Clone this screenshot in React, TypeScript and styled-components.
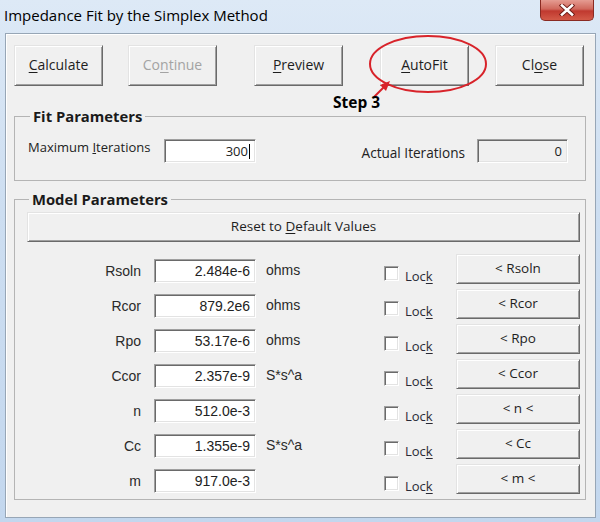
import React from "react";
import styled, { createGlobalStyle } from "styled-components";

const GlobalStyle = createGlobalStyle`
  html, body {
    margin: 0;
    padding: 0;
    background: #ffffff;
  }
  body {
    font-family: "Open Sans", "Noto Sans", sans-serif;
    color: #1e1e1e;
  }
`;

const Window = styled.div`
  position: relative;
  width: 600px;
  height: 522px;
  box-sizing: border-box;
  display: flex;
  flex-direction: column;
  background: linear-gradient(180deg, #dde9f6 0%, #cddef1 40%, #c3d7ee 100%);
  overflow: hidden;
`;

const TitleBar = styled.div`
  height: 33px;
  flex: none;
  display: flex;
  align-items: flex-start;
  justify-content: space-between;
  padding-left: 4px;
`;

const Title = styled.div`
  margin-top: 5px;
  font-size: 15px;
  line-height: 20px;
  color: #000;
`;

const CloseBox = styled.div`
  width: 54px;
  height: 21px;
  margin-right: 6px;
  box-sizing: border-box;
  border: 1px solid #8a2a22;
  border-top: none;
  border-radius: 0 0 5px 5px;
  background: linear-gradient(180deg, #e59c92 0%, #d0685c 45%, #c0392f 55%, #d35a48 100%);
  display: flex;
  align-items: center;
  justify-content: center;
`;

const Client = styled.div`
  flex: 1;
  margin: 0 4px 4px 5px;
  border: 1px solid #97a6b6;
  box-shadow: inset 1px 1px #ffffff;
  background: #f0f0f0;
  padding: 11px 9px 0 8px;
  display: flex;
  flex-direction: column;
`;

const TopButtons = styled.div`
  display: flex;
`;

const Button = styled.div<{ $w?: number; $h?: number; $disabled?: boolean; $size?: number; $ml?: number }>`
  width: ${(p) => (p.$w ? `${p.$w}px` : "auto")};
  height: ${(p) => p.$h ?? 30}px;
  margin-left: ${(p) => p.$ml ?? 0}px;
  box-sizing: border-box;
  border: 1px solid;
  border-color: #e3e3e3 #6a6a6a #6a6a6a #e3e3e3;
  box-shadow: inset 1px 1px #ffffff, inset -1px -1px #a0a0a0;
  background: #f0f0f0;
  display: flex;
  align-items: center;
  justify-content: center;
  font-size: ${(p) => p.$size ?? 14}px;
  color: ${(p) => (p.$disabled ? "#a3a3a3" : "#1e1e1e")};
  padding-bottom: 2px;
  white-space: nowrap;

  u {
    text-underline-offset: 2px;
  }
`;

const Group = styled.fieldset`
  margin: 0;
  padding: 0;
  border: 1px solid #b4b4b4;
  min-width: 0;
`;

const GroupTitle = styled.legend<{ $ml?: number }>`
  margin-left: ${(p) => p.$ml ?? 15}px;
  padding: 0 3px;
  font-size: 14.8px;
  font-weight: 700;
  line-height: 18px;
  color: #1a1a1a;
`;

const FitGroup = styled(Group)`
  margin-top: 21px;
`;

const ModelGroup = styled(Group)`
  margin-top: 9px;
`;

const ModelBody = styled.div`
  padding: 4px 5px 5px 12px;
`;

const FitRow = styled.div`
  display: flex;
  align-items: center;
  padding: 14px 17px 17px 13px;
`;

const FitLabel = styled.div<{ $w?: number; $push?: boolean }>`
  width: ${(p) => (p.$w ? `${p.$w}px` : "auto")};
  margin-left: ${(p) => (p.$push ? "auto" : "0")};
  margin-right: ${(p) => (p.$push ? "12px" : "0")};
  font-size: ${(p) => (p.$push ? 13.6 : 13)}px;
  line-height: 18px;
  color: #222;
  align-self: ${(p) => (p.$push ? "center" : "flex-start")};
  margin-top: ${(p) => (p.$push ? "4px" : "-1px")};
`;

const Field = styled.div<{ $w: number; $disabled?: boolean; $classic?: boolean }>`
  width: ${(p) => p.$w}px;
  height: 24px;
  box-sizing: border-box;
  border: 1px solid;
  border-color: #a0a0a0 #ffffff #ffffff #a0a0a0;
  box-shadow: inset 1px 1px #6a6a6a, inset -1px -1px #e3e3e3;
  background: ${(p) => (p.$disabled ? "#f0f0f0" : "#ffffff")};
  display: flex;
  align-items: center;
  justify-content: flex-end;
  padding-right: 5px;
  font-family: ${(p) =>
    p.$classic ? '"Liberation Sans", Arial, sans-serif' : '"Open Sans", sans-serif'};
  font-size: ${(p) => (p.$classic ? 14 : 13)}px;
  color: #222;
`;

const ValueField = styled(Field)`
  margin-bottom: 1px;
`;

const Caret = styled.span`
  display: inline-block;
  width: 1px;
  height: 15px;
  background: #000;
  margin-left: 1px;
`;

const Params = styled.div`
  margin-top: 12px;
  display: flex;
  flex-direction: column;
  gap: 5px;
`;

const ParamRow = styled.div`
  height: 30px;
  display: flex;
  align-items: flex-end;
`;

const ParamName = styled.div`
  width: 114px;
  margin-right: 13px;
  margin-bottom: 4px;
  text-align: right;
  font-family: "Liberation Sans", Arial, sans-serif;
  font-size: 14px;
  line-height: 18px;
  color: #2a2a2a;
`;

const Unit = styled.div`
  width: 128px;
  box-sizing: border-box;
  padding-left: 10px;
  margin-bottom: 5px;
  font-family: "Liberation Sans", Arial, sans-serif;
  font-size: 14px;
  line-height: 18px;
  color: #2a2a2a;
`;

const LockBox = styled.div`
  width: 72px;
  display: flex;
  align-items: flex-end;
`;

const Check = styled.div`
  width: 15px;
  height: 15px;
  box-sizing: border-box;
  border: 1px solid;
  border-color: #a0a0a0 #ffffff #ffffff #a0a0a0;
  box-shadow: inset 1px 1px #6a6a6a, inset -1px -1px #e3e3e3;
  background: #ffffff;
  margin-bottom: 3px;
  margin-right: 6px;
`;

const LockText = styled.div`
  font-size: 13px;
  line-height: 16px;
  color: #2a2a35;

  u {
    text-underline-offset: 2px;
  }
`;

const Overlay = styled.svg`
  position: absolute;
  left: 0;
  top: 0;
  pointer-events: none;
`;

const StepNote = styled.div`
  position: absolute;
  left: 333px;
  top: 91px;
  font-size: 15.5px;
  font-weight: 700;
  color: #000;
`;

const params = [
  { name: "Rsoln", value: "2.484e-6", unit: "ohms", btn: "< Rsoln" },
  { name: "Rcor", value: "879.2e6", unit: "ohms", btn: "< Rcor" },
  { name: "Rpo", value: "53.17e-6", unit: "ohms", btn: "< Rpo" },
  { name: "Ccor", value: "2.357e-9", unit: "S*s^a", btn: "< Ccor" },
  { name: "n", value: "512.0e-3", unit: "", btn: "< n <" },
  { name: "Cc", value: "1.355e-9", unit: "S*s^a", btn: "< Cc" },
  { name: "m", value: "917.0e-3", unit: "", btn: "< m <" },
];

export default function App() {
  return (
    <>
      <GlobalStyle />
      <Window>
        <TitleBar>
          <Title>Impedance Fit by the Simplex Method</Title>
          <CloseBox>
            <svg width="16" height="12" viewBox="0 0 16 12">
              <path d="M3 1.5 L13 10.5 M13 1.5 L3 10.5" stroke="#6b1a14" strokeWidth="4.4" strokeLinecap="square" />
              <path d="M3 1.5 L13 10.5 M13 1.5 L3 10.5" stroke="#ffffff" strokeWidth="2.6" strokeLinecap="square" />
            </svg>
          </CloseBox>
        </TitleBar>

        <Client>
          <TopButtons>
            <Button $w={89} $h={41}>
              <span><u>C</u>alculate</span>
            </Button>
            <Button $w={89} $h={41} $ml={25} $disabled>
              <span>Co<u>n</u>tinue</span>
            </Button>
            <Button $w={89} $h={41} $ml={37}>
              <span><u>P</u>review</span>
            </Button>
            <Button $w={89} $h={41} $ml={37}>
              <span><u>A</u>utoFit</span>
            </Button>
            <Button $w={89} $h={41} $ml={26}>
              <span>Cl<u>o</u>se</span>
            </Button>
          </TopButtons>

          <FitGroup>
            <GroupTitle>Fit Parameters</GroupTitle>
            <FitRow>
              <FitLabel $w={136}>
                Maximum <u>I</u>terations
              </FitLabel>
              <Field $w={92}>
                300
                <Caret />
              </Field>
              <FitLabel $push>Actual Iterations</FitLabel>
              <Field $w={91} $disabled>
                0
              </Field>
            </FitRow>
          </FitGroup>

          <ModelGroup>
            <GroupTitle $ml={14}>Model Parameters</GroupTitle>
            <ModelBody>
              <Button $h={30} $size={13.5}>
                <span>
                  Reset to <u>D</u>efault Values
                </span>
              </Button>
              <Params>
                {params.map((p) => (
                  <ParamRow key={p.name}>
                    <ParamName>{p.name}</ParamName>
                    <ValueField $w={102} $classic>
                      {p.value}
                    </ValueField>
                    <Unit>{p.unit}</Unit>
                    <LockBox>
                      <Check />
                      <LockText>
                        Loc<u>k</u>
                      </LockText>
                    </LockBox>
                    <Button $w={124} $h={30} $size={13.5}>
                      {p.btn}
                    </Button>
                  </ParamRow>
                ))}
              </Params>
            </ModelBody>
          </ModelGroup>
        </Client>

        <Overlay width="600" height="522" viewBox="0 0 600 522">
          <ellipse cx="428" cy="64" rx="58" ry="28" fill="none" stroke="#d8232a" strokeWidth="2" />
          <path d="M374 97 L385 86" stroke="#d8232a" strokeWidth="2" />
          <polygon points="390,81 380,85 386,91" fill="#d8232a" />
        </Overlay>
        <StepNote>Step 3</StepNote>
      </Window>
    </>
  );
}
